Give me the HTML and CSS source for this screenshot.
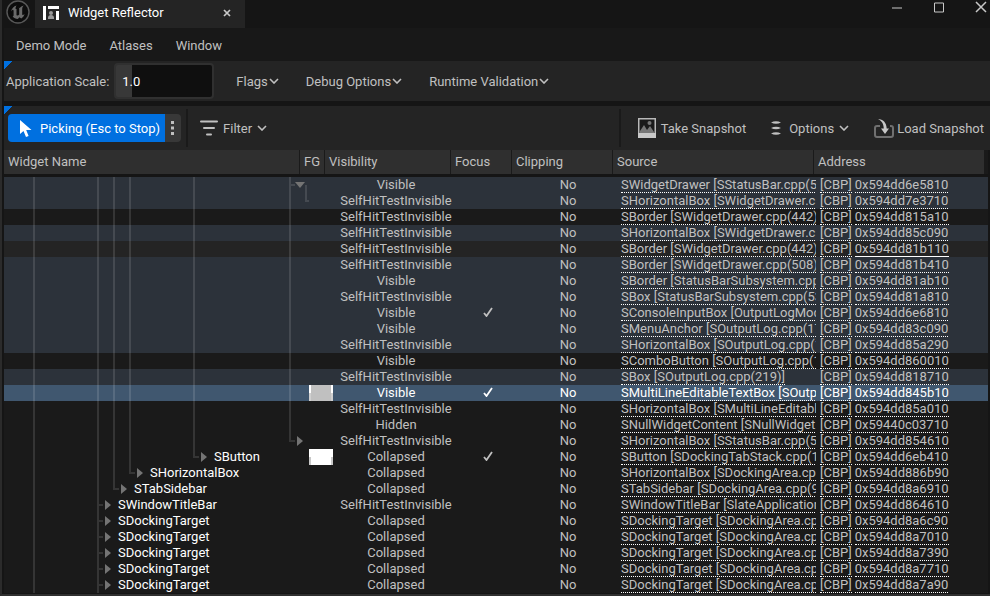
FILE: index.html
```html
<!DOCTYPE html>
<html lang="en">
<head>
  <meta charset="UTF-8">
  <meta name="viewport" content="width=device-width, initial-scale=1.0">
  <title>Widget Reflector</title>
  <link rel="stylesheet" href="styles.css">
</head>
<body>
  <div class="window">
    <header class="titlebar">
      <svg class="logo" viewBox="0 0 24 24">
        <circle cx="12" cy="12" r="11" fill="#0c0c0c" stroke="#585858" stroke-width="1.4"/>
        <path fill="#6a6a6a" d="M10.6 5.4C7.8 6.2 5.6 8.4 5 11.4c.8-1.1 1.7-1.7 2.2-1.5.4.2.4.6.4 1.2v4.2c0 .8-.5 1-1 1 1.2 1.7 3.1 2.8 5.2 2.8l1.7-1.8 1.7 1.3c1.9-1.2 3-2.9 3.3-4.5-.9.9-1.6 1.2-2 .9-.3-.2-.3-.6-.3-1V9c0-1.500.7-2.500 1.5-3.400-1.600.3-3.200 1.500-4 2.600-.3-.3-.7-.4-1.100-.4.4.3.6.7.6 1.200v5.600c-.5.5-1.200.9-1.800.9-.7 0-.9-.4-.9-1V8.900h-.9c-.1-1.400.2-2.500 1-3.500z"/>
      </svg>
      <div class="tab">
        <svg class="tab-icon" viewBox="0 0 16 14">
          <path fill="#fff" d="M0 0h3v14H0zM5 0h11v3H5zM13 5h3v9h-3z"/>
          <circle cx="8" cy="7" r="2" fill="#999"/>
          <path fill="#999" d="M5 13v-1c0-2 1-3 3-3s3 1 3 3v1z"/>
        </svg>
        <span>Widget Reflector</span>
        <button class="tab-close" aria-label="Close tab">
          <svg viewBox="0 0 8 8"><path d="M1 1l6 6M7 1L1 7" stroke="#c8c8c8" stroke-width="1.7"/></svg>
        </button>
      </div>
      <div class="window-buttons">
        <button aria-label="Minimize"><svg viewBox="0 0 12 12"><path d="M1 7.5h10"/></svg></button>
        <button aria-label="Maximize"><svg viewBox="0 0 12 12"><path d="M1.5 2.5h9v9h-9z"/></svg></button>
        <button aria-label="Close"><svg viewBox="0 0 12 12"><path d="M1 1.5l10 10M11 1.5l-10 10" stroke-width="1.5"/></svg></button>
      </div>
    </header>

    <nav class="menubar">
      <button>Demo Mode</button>
      <button>Atlases</button>
      <button>Window</button>
    </nav>

    <div class="toolbar settings">
      <label for="app-scale">Application Scale:</label>
      <input id="app-scale" class="scale" type="text" value="1.0">
      <button>Flags<svg class="chevron" viewBox="0 0 10 6"><path d="M1 1l4 4 4-4"/></svg></button>
      <button>Debug Options<svg class="chevron" viewBox="0 0 10 6"><path d="M1 1l4 4 4-4"/></svg></button>
      <button>Runtime Validation<svg class="chevron" viewBox="0 0 10 6"><path d="M1 1l4 4 4-4"/></svg></button>
    </div>

    <div class="toolbar actions">
      <div class="split">
        <button class="picking">
          <svg viewBox="0 0 12 17"><path fill="#fff" d="M0 0v14l3.500-3 2.500 6 2.600-1.100L6.200 10H11.500z"/></svg>
          Picking (Esc to Stop)
        </button>
        <button class="more" aria-label="Picking mode">
          <svg viewBox="0 0 4 16"><path fill="#c0c0c0" d="M0 1h3v3H0zM0 6.500h3v3H0zM0 12h3v3H0z"/></svg>
        </button>
      </div>
      <button class="filter">
        <svg class="filter-icon" viewBox="0 0 18 16"><path d="M1 1.500h16M4 8h10M7 14.500h4" stroke="#c0c0c0" stroke-width="2" stroke-linecap="round"/></svg>
        Filter
        <svg class="chevron" viewBox="0 0 10 6"><path d="M1 1l4 4 4-4"/></svg>
      </button>
      <div class="right">
        <button class="take">
          <svg class="snapshot-icon" viewBox="0 0 18 20">
            <path d="M.75.75h16.500v18H.75z" fill="#1a1a1a" stroke="#b8b8b8" stroke-width="1.5"/>
            <circle cx="11.5" cy="5" r="2" fill="#777"/>
            <path fill="#777" d="M2 15v-2l4-6 3 5 3-4 4 6v1z"/>
            <path fill="#c8c8c8" d="M0 15h18v5H0z"/>
          </svg>
          Take Snapshot
        </button>
        <button class="options">
          <svg class="options-icon" viewBox="0 0 10 14"><path fill="#c0c0c0" d="M0 1.500Q5-1 10 1.500 5 4 0 1.500zM0 7Q5 4.500 10 7 5 9.500 0 7zM0 12.500Q5 10 10 12.500 5 15 0 12.500z"/></svg>
          Options
          <svg class="chevron" viewBox="0 0 10 6"><path d="M1 1l4 4 4-4"/></svg>
        </button>
        <button class="load">
          <svg class="load-icon" viewBox="0 0 20 19">
            <path d="M6 7H3Q1 7 1 9v7q0 2 2 2h14q2 0 2-2V9q0-2-2-2h-1" fill="none" stroke="#707070" stroke-width="2"/>
            <path fill="#c8c8c8" d="M4 0c5 .2 8.500 3.500 8.700 9.500H15L11 15 7 9.500h2.800C9.600 5 8 2 4 0z"/>
          </svg>
          Load Snapshot
        </button>
      </div>
    </div>

    <table class="tree">
      <thead>
        <tr>
          <th>Widget Name</th>
          <th>FG</th>
          <th>Visibility</th>
          <th>Focus</th>
          <th>Clipping</th>
          <th>Source</th>
          <th>Address</th>
        </tr>
      </thead>
      <tbody id="rows"></tbody>
    </table>
  </div>
  <script src="reflector.js"></script>
</body>
</html>
```

FILE: reflector.js
```js
// S = SelfHitTestInvisible, V = Visible, H = Hidden, C = Collapsed
const visibility = { S: 'SelfHitTestInvisible', V: 'Visible', H: 'Hidden', C: 'Collapsed' };

// One character per indent level:
// "." empty, "|" line, "+" line with branch, "L" last branch, "v" expanded, ">" collapsed
const open = '.|...|||...|.....|';

const rows = [
  { tree: '.|...|||...|.....+v', vis: 'V', source: 'SWidgetDrawer [SStatusBar.cpp(5', address: '0x594dd6e5810', row: 'picked' },
  { tree: open + 'L', vis: 'S', source: 'SHorizontalBox [SWidgetDrawer.c', address: '0x594dd7e3710', row: 'picked' },
  { tree: open, vis: 'S', source: 'SBorder [SWidgetDrawer.cpp(442)', address: '0x594dd815a10' },
  { tree: open, vis: 'S', source: 'SHorizontalBox [SWidgetDrawer.c', address: '0x594dd85c090', row: 'picked' },
  { tree: open, vis: 'S', source: 'SBorder [SWidgetDrawer.cpp(442)', address: '0x594dd81b110', row: 'hovered' },
  { tree: open, vis: 'S', source: 'SBorder [SWidgetDrawer.cpp(508)', address: '0x594dd81b410', row: 'picked' },
  { tree: open, vis: 'V', source: 'SBorder [StatusBarSubsystem.cpp', address: '0x594dd81ab10', row: 'picked' },
  { tree: open, vis: 'S', source: 'SBox [StatusBarSubsystem.cpp(53', address: '0x594dd81a810', row: 'picked' },
  { tree: open, vis: 'V', focus: true, source: 'SConsoleInputBox [OutputLogMod', address: '0x594dd6e6810', row: 'picked' },
  { tree: open, vis: 'V', source: 'SMenuAnchor [SOutputLog.cpp(17', address: '0x594dd83c090', row: 'picked' },
  { tree: open, vis: 'S', source: 'SHorizontalBox [SOutputLog.cpp(1', address: '0x594dd85a290', row: 'picked' },
  { tree: open, vis: 'V', source: 'SComboButton [SOutputLog.cpp(18', address: '0x594dd860010' },
  { tree: open, vis: 'S', source: 'SBox [SOutputLog.cpp(219)]', address: '0x594dd818710', row: 'picked' },
  { tree: open, vis: 'V', focus: true, swatch: 'grey', source: 'SMultiLineEditableTextBox [SOutp', address: '0x594dd845b10', row: 'selected' },
  { tree: open, vis: 'S', source: 'SHorizontalBox [SMultiLineEditable', address: '0x594dd85a010' },
  { tree: open, vis: 'H', source: 'SNullWidgetContent [SNullWidget.c', address: '0x59440c03710' },
  { tree: '.|...|||...|.....L>', vis: 'S', source: 'SHorizontalBox [SStatusBar.cpp(5', address: '0x594dd854610' },
  { tree: '.|...|||...L>', name: 'SButton', vis: 'C', focus: true, swatch: 'white', source: 'SButton [SDockingTabStack.cpp(1', address: '0x594dd6eb410' },
  { tree: '.|...||L>', name: 'SHorizontalBox', vis: 'C', source: 'SHorizontalBox [SDockingArea.cp', address: '0x594dd886b90' },
  { tree: '.|...|L>', name: 'STabSidebar', vis: 'C', source: 'STabSidebar [SDockingArea.cpp(9', address: '0x594dd8a6910' },
  { tree: '.|...+>', name: 'SWindowTitleBar', vis: 'S', source: 'SWindowTitleBar [SlateApplication', address: '0x594dd864610' },
  ...['0x594dd8a6c90', '0x594dd8a7010', '0x594dd8a7390', '0x594dd8a7710', '0x594dd8a7a90'].map(address => (
    { tree: '.|...+>', name: 'SDockingTarget', vis: 'C', source: 'SDockingTarget [SDockingArea.cp', address }
  ))
];

const wires = {
  '.': '<i class="wire"></i>',
  '|': '<i class="wire line"></i>',
  '+': '<i class="wire line branch"></i>',
  'L': '<i class="wire last branch"></i>',
  'v': '<button class="wire expander open" aria-label="Collapse"><svg viewBox="0 0 10 10"><path d="M0 2h10L5 8z"/></svg></button>',
  '>': '<button class="wire expander" aria-label="Expand"><svg viewBox="0 0 10 10"><path d="M2 0v10l6-5z"/></svg></button>'
};

const check = '<svg class="check" viewBox="0 0 10 10"><path d="M1 6l2.5 3L9 1"/></svg>';

document.getElementById('rows').innerHTML = rows.map(r => `
  <tr class="${r.row || ''}">
    <td class="name">${[...r.tree].map(c => wires[c]).join('')}<span>${r.name || ''}</span></td>
    <td>${r.swatch ? `<div class="swatch ${r.swatch}"></div>` : ''}</td>
    <td class="center">${visibility[r.vis]}</td>
    <td class="center">${r.focus ? check : ''}</td>
    <td class="center">No</td>
    <td class="source"><a href="#">${r.source}</a></td>
    <td class="address"><a href="#">[CBP]</a><a class="pointer" href="#">${r.address}</a></td>
  </tr>`).join('');
```

FILE: styles.css
```css
* {
  box-sizing: border-box;
}

body {
  margin: 0;
  height: 100vh;
  overflow: hidden;
  background-color: #151515;
  color: #c0c0c0;
  font-family: Roboto, 'Liberation Sans', sans-serif;
  font-size: 13px;
}

button {
  display: flex;
  align-items: center;
  padding: 0;
  border: 0;
  background: none;
  color: inherit;
  font: inherit;
  white-space: nowrap;
}

svg {
  flex: none;
}

.window {
  display: flex;
  flex-direction: column;
  height: 100vh;
  padding-left: 2px;
  border-left: 2px solid #2b2b2b;
  border-bottom: 2px solid #2f2f2f;
}

/* Title bar */
.titlebar {
  display: flex;
  height: 28px;
}

.logo {
  width: 24px;
  height: 24px;
  margin: 0 5px 0 2px;
}

.tab {
  display: flex;
  align-items: center;
  width: 210px;
  padding: 0 14px 3px 8px;
  background-color: #242424;
  color: #fff;
}

.tab-icon {
  width: 16px;
  height: 14px;
  margin-right: 9px;
}

.tab-close {
  margin-left: auto;
}

.tab-close svg {
  width: 8px;
  height: 8px;
}

.window-buttons {
  display: flex;
  align-items: flex-start;
  gap: 30px;
  margin-left: auto;
  padding-right: 3px;
}

.window-buttons svg {
  width: 12px;
  height: 13px;
  fill: none;
  stroke: #c8c8c8;
}

.menubar {
  display: flex;
  gap: 23px;
  height: 33px;
  padding: 2px 12px 0;
  background-color: #181818;
}

/* Toolbars */
.toolbar {
  display: flex;
  align-items: center;
  background: linear-gradient(135deg, #0070e0 6px, transparent 6px) no-repeat #242424;
}

.chevron {
  width: 10px;
  height: 6px;
  fill: none;
  stroke: #c0c0c0;
  stroke-width: 1.6;
}

.settings {
  height: 40px;
  margin-bottom: 5px;
  padding-left: 2px;
}

.settings button {
  gap: 1px;
  margin-right: 27px;
}

.scale {
  width: 100px;
  height: 36px;
  margin: 0 22px 0 5px;
  padding: 0 6px;
  border: 2px solid #303030;
  border-radius: 4px;
  background: linear-gradient(#383838, #383838) no-repeat 0 0 / 16px 100% #0f0f0f;
  color: #fff;
  font: inherit;
}

.actions {
  height: 44px;
  padding: 0 6px 0 4px;
}

.split {
  display: flex;
  height: 28px;
  border-radius: 4px;
  overflow: hidden;
}

.picking {
  gap: 8px;
  padding: 0 5px 0 12px;
  background-color: #0070e0;
  color: #fff;
}

.picking svg {
  width: 12px;
  height: 17px;
}

.more {
  justify-content: center;
  width: 16px;
  background-color: #383838;
}

.more svg {
  width: 4px;
  height: 16px;
}

.filter {
  gap: 5px;
  height: 38px;
  margin-left: 5px;
  padding-left: 12px;
  border-left: 2px solid #1a1a1a;
}

.filter-icon {
  width: 18px;
  height: 16px;
}

.right {
  display: flex;
  gap: 25px;
  height: 38px;
  margin-left: auto;
  padding-left: 17px;
  border-left: 2px solid #1a1a1a;
}

.take,
.options {
  gap: 5px;
}

.load {
  gap: 3px;
}

.snapshot-icon {
  width: 18px;
  height: 20px;
}

.options-icon {
  width: 10px;
  height: 14px;
  margin-right: 3px;
}

.load-icon {
  width: 20px;
  height: 19px;
}

/* Widget tree */
.tree {
  display: block;
  margin-right: 2px;
  background-color: #1a1a1a;
}

.tree thead,
.tree tbody {
  display: block;
}

.tree tr {
  display: grid;
}

.tree thead {
  padding-right: 4px;
  border-bottom: 3px solid #151515;
}

.tree thead tr {
  grid-template-columns: minmax(0, 1fr) 25px 126px 61px 101px 201px 170px;
  height: 24px;
  background-color: #2f2f2f;
}

.tree th {
  padding: 0 4px;
  border-right: 1px solid #1a1a1a;
  font-weight: normal;
  line-height: 24px;
  text-align: left;
}

.tree th:last-child {
  border-right: 0;
}

.tree tbody tr {
  grid-template-columns: minmax(0, 1fr) 24px 126px 58px 102px 198px 171px;
  height: 16px;
  line-height: 16px;
}

.tree td {
  min-width: 0;
  padding: 0;
  white-space: nowrap;
}

.tree .picked {
  background-color: #2c323a;
}

.tree .hovered {
  background-color: #242424;
}

.tree .selected {
  background-color: #40576f;
  color: #fff;
}

.name {
  display: flex;
  overflow: hidden;
  color: #fff;
}

.name span {
  margin-left: 2px;
}

.center {
  text-align: center;
}

.wire {
  position: relative;
  flex: none;
  width: 16px;
  height: 16px;
}

.line::before,
.last::before,
.open::before {
  content: "";
  position: absolute;
  left: 13px;
  top: 0;
  width: 2px;
  height: 16px;
  background-color: rgba(255, 255, 255, 0.12);
}

.last::before {
  height: 9px;
}

.open::before {
  top: 8px;
  height: 8px;
}

.branch::after {
  content: "";
  position: absolute;
  left: 15px;
  top: 7px;
  width: 4px;
  height: 2px;
  background-color: rgba(255, 255, 255, 0.12);
}

.expander {
  justify-content: center;
}

.expander svg {
  width: 10px;
  height: 10px;
  fill: #747474;
}

/* Colour chip, the side edges change shade half way down */
.swatch {
  height: 16px;
  padding: 0 2px;
  background: linear-gradient(#fff 50%, #c8c8c8 50%);
}

.swatch::before {
  content: "";
  display: block;
  height: 16px;
  background-color: #fff;
}

.swatch.grey {
  background: linear-gradient(#fff 50%, #d0d0d0 50%);
}

.swatch.grey::before {
  background-color: #c0c0c0;
}

.check {
  width: 10px;
  height: 10px;
  fill: none;
  stroke: currentColor;
  stroke-width: 1.8;
}

.source {
  margin-right: 1px;
  overflow: hidden;
}

.tree .source {
  padding-left: 2px;
}

.tree a {
  display: inline-block;
  height: 16px;
  border-bottom: 1px dotted #fff;
  color: inherit;
  line-height: 15px;
  text-decoration: none;
  vertical-align: top;
}

.address {
  display: flex;
  gap: 3px;
}

.tree .address {
  padding-left: 3px;
}

.tree .hovered .pointer {
  border-bottom-style: solid;
}
```
